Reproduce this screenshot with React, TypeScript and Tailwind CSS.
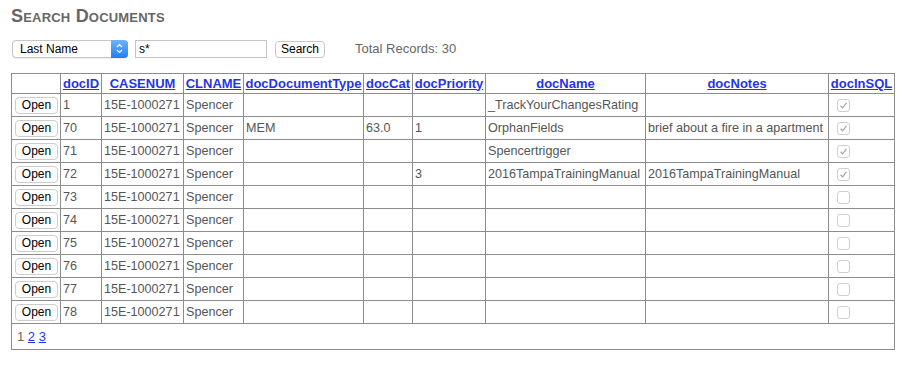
import React from "react";

const rows = [
  { id: "1", type: "", cat: "", pri: "", name: "_TrackYourChangesRating", notes: "", sql: true },
  { id: "70", type: "MEM", cat: "63.0", pri: "1", name: "OrphanFields", notes: "brief about a fire in a apartment", sql: true },
  { id: "71", type: "", cat: "", pri: "", name: "Spencertrigger", notes: "", sql: true },
  { id: "72", type: "", cat: "", pri: "3", name: "2016TampaTrainingManual", notes: "2016TampaTrainingManual", sql: true },
  { id: "73", type: "", cat: "", pri: "", name: "", notes: "", sql: false },
  { id: "74", type: "", cat: "", pri: "", name: "", notes: "", sql: false },
  { id: "75", type: "", cat: "", pri: "", name: "", notes: "", sql: false },
  { id: "76", type: "", cat: "", pri: "", name: "", notes: "", sql: false },
  { id: "77", type: "", cat: "", pri: "", name: "", notes: "", sql: false },
  { id: "78", type: "", cat: "", pri: "", name: "", notes: "", sql: false },
];

const headers = ["docID", "CASENUM", "CLNAME", "docDocumentType", "docCat", "docPriority", "docName", "docNotes", "docInSQL"];
const widths = [49, 41, 82, 60, 120, 49, 73, 160, 183, 66];

function Check({ checked }: { checked: boolean }) {
  return (
    <div className="ml-[6px] flex h-[13px] w-[13px] items-center justify-center rounded-[3px] border border-[#cfcfcf] bg-white">
      {checked && (
        <svg width="9" height="9" viewBox="0 0 9 9">
          <path d="M1.5 4.8 L3.6 6.8 L7.5 1.8" fill="none" stroke="#a8a8a8" strokeWidth="1.2" />
        </svg>
      )}
    </div>
  );
}

const td = "border border-[#8c8c8c] px-[2px] h-[23px] align-middle whitespace-nowrap overflow-hidden text-[12.6px]";

export default function App() {
  return (
    <div className="min-h-[377px] w-[920px] bg-white text-[13px] text-[#555] [font-family:'Liberation_Sans',Arial,sans-serif]">
      <div className="pl-[11px] pt-[7px]">
        <h1 className="text-[18px] font-bold leading-[18px] text-[#666] [font-variant:small-caps] tracking-[0.2px]">
          Search Documents
        </h1>
        <div className="mt-[14px] flex items-center">
          <div className="relative ml-[1px] flex h-[18px] w-[116px] items-center rounded-[4px] border border-[#c6c6c6] bg-white shadow-[0_1px_1px_rgba(0,0,0,0.08)]">
            <span className="pl-[7px] text-[12px] text-black">Last Name</span>
            <div className="absolute right-[-1px] top-[-1px] flex h-[18px] w-[17px] items-center justify-center rounded-r-[4px] bg-gradient-to-b from-[#6cb3fa] to-[#1b7ef3]">
              <svg width="7" height="11" viewBox="0 0 7 11">
                <path d="M1 4 L3.5 1.5 L6 4 M1 7 L3.5 9.5 L6 7" fill="none" stroke="white" strokeWidth="1.2" />
              </svg>
            </div>
          </div>
          <div className="ml-[7px] flex h-[18px] w-[132px] items-center border border-[#c4c4c4] bg-white pl-[3px] text-[12px] text-black">
            s*
          </div>
          <button className="ml-[8px] mt-[2px] h-[17px] w-[50px] rounded-[4px] border border-[#c8c8c8] bg-white text-[12px] leading-[15px] text-black">
            Search
          </button>
          <span className="ml-[30px] text-[13px] text-[#666]">Total Records: 30</span>
        </div>
      </div>
      <table className="ml-[11px] mt-[14px] table-fixed border-collapse border border-[#8c8c8c]" style={{ width: 883 }}>
        <colgroup>
          {widths.map((w, i) => (
            <col key={i} style={{ width: w }} />
          ))}
        </colgroup>
        <thead>
          <tr>
            <th className="h-[20px] border border-[#8c8c8c]"></th>
            {headers.map((h) => (
              <th key={h} className="h-[20px] border border-[#8c8c8c] px-[1px] text-center align-middle whitespace-nowrap">
                <a className="font-bold text-[#1f36e6] underline text-[13px]" href="#">
                  {h}
                </a>
              </th>
            ))}
          </tr>
        </thead>
        <tbody>
          {rows.map((r) => (
            <tr key={r.id}>
              <td className={td}>
                <button className="ml-[1px] flex h-[17px] w-[43px] items-center justify-center rounded-[4px] border border-[#cdcdcd] bg-white text-[12px] text-black">
                  Open
                </button>
              </td>
              <td className={td}>{r.id}</td>
              <td className={td}>15E-1000271</td>
              <td className={td}>Spencer</td>
              <td className={td}>{r.type}</td>
              <td className={td}>{r.cat}</td>
              <td className={td}>{r.pri}</td>
              <td className={td}>{r.name}</td>
              <td className={td}>{r.notes}</td>
              <td className={td}>
                <Check checked={r.sql} />
              </td>
            </tr>
          ))}
          <tr>
            <td colSpan={10} className="h-[26px] border border-[#8c8c8c] pl-[5px] align-middle text-[13px]">
              <span className="text-[#6f6658]">1</span>{" "}
              <a href="#" className="text-[#1f36e6] underline">2</a>{" "}
              <a href="#" className="text-[#1f36e6] underline">3</a>
            </td>
          </tr>
        </tbody>
      </table>
    </div>
  );
}
